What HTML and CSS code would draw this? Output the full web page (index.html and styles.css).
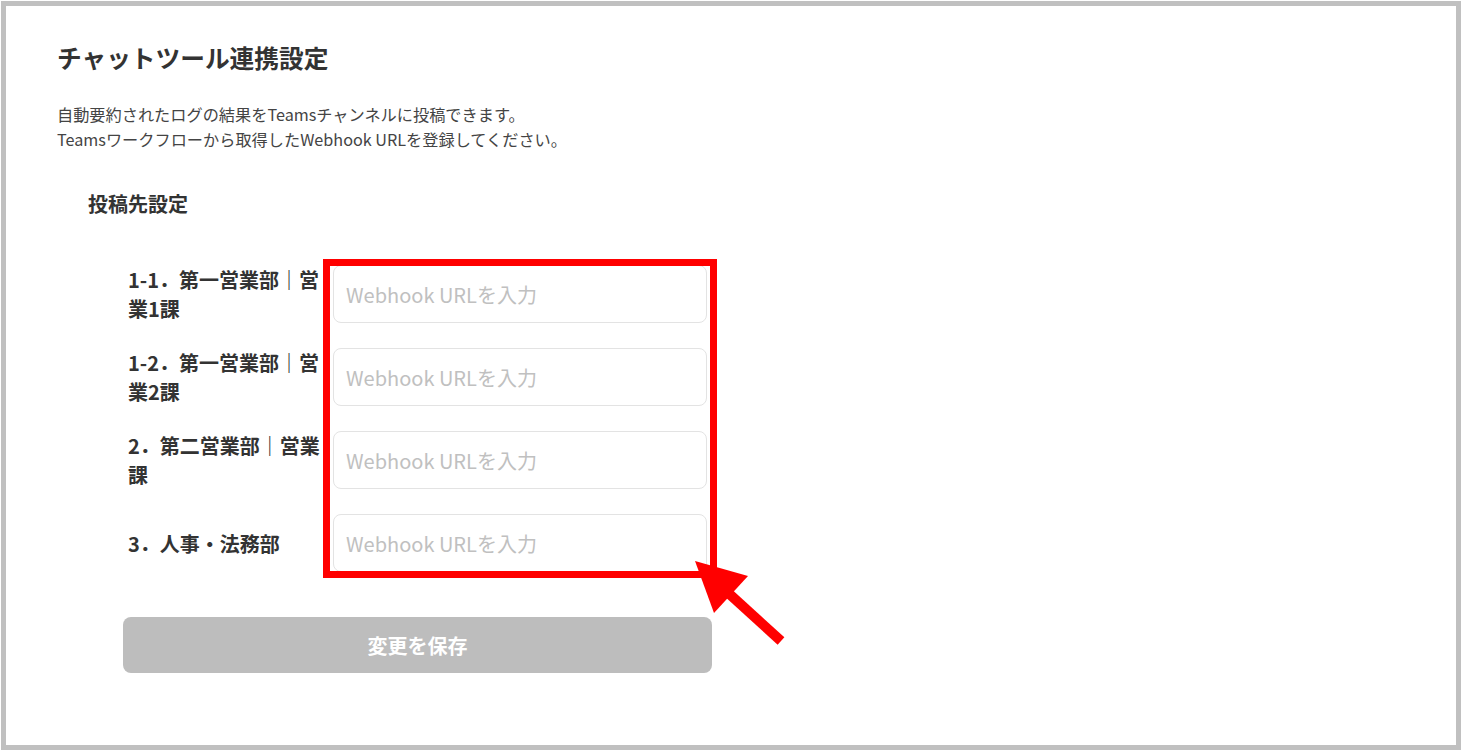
FILE: index.html
```html
<!DOCTYPE html>
<html lang="ja">
<head>
<meta charset="utf-8">
<title>チャットツール連携設定</title>
<link rel="stylesheet" href="styles.css">
</head>
<body>
<div class="card">
  <h1 class="title">チャットツール連携設定</h1>
  <p class="desc">自動要約されたログの結果をTeamsチャンネルに投稿できます。<br>Teamsワークフローから取得したWebhook URLを登録してください。</p>
  <h2 class="section">投稿先設定</h2>
  <div class="rows">
    <div class="row">
      <label class="label">1-1．第一営業部｜営業1課</label>
      <input class="field" type="text" placeholder="Webhook URLを入力">
    </div>
    <div class="row">
      <label class="label">1-2．第一営業部｜営業2課</label>
      <input class="field" type="text" placeholder="Webhook URLを入力">
    </div>
    <div class="row">
      <label class="label">2．第二営業部｜営業課</label>
      <input class="field" type="text" placeholder="Webhook URLを入力">
    </div>
    <div class="row">
      <label class="label">3．人事・法務部</label>
      <input class="field" type="text" placeholder="Webhook URLを入力">
    </div>
    <div class="highlight"></div>
  </div>
  <button class="save" type="button">変更を保存</button>
  <svg class="arrow" width="100" height="95" viewBox="0 0 100 95">
    <line x1="35" y1="35" x2="91" y2="86" stroke="#ff0000" stroke-width="10"/>
    <polygon points="5,6 58,21 24,58" fill="#ff0000"/>
  </svg>
</div>
</body>
</html>
```
FILE: styles.css
```css
* { box-sizing: border-box; }
html, body { margin: 0; padding: 0; background: #ffffff; }
body {
  font-family: "Noto Sans CJK JP", "Noto Sans", sans-serif;
  color: #333333;
}
.card {
  position: relative;
  margin: 1px 0 0 1px;
  width: 1460px;
  height: 749px;
  border: 5px solid #c0c0c0;
  padding: 35px 0 0 51px;
}
.title {
  margin: 0;
  font-size: 24.7px;
  line-height: 32px;
  font-weight: 700;
  color: #333333;
}
.desc {
  margin: 29px 0 0;
  font-size: 16.2px;
  line-height: 25px;
  color: #444444;
}
.section {
  margin: 38px 0 0 31px;
  font-size: 20px;
  line-height: 28px;
  font-weight: 700;
  color: #333333;
}
.rows {
  position: relative;
  margin: 47px 0 0 71px;
  width: 579px;
  display: flex;
  flex-direction: column;
  gap: 25px;
}
.row {
  display: flex;
  align-items: center;
  gap: 9px;
}
.label {
  width: 196px;
  flex: none;
  font-size: 20px;
  line-height: 29px;
  font-weight: 700;
  color: #333333;
}
.field {
  width: 374px;
  height: 58px;
  border: 1px solid #e3e3e3;
  border-radius: 8px;
  padding: 0 12px;
  font-family: "Noto Sans CJK JP", "Noto Sans", sans-serif;
  font-size: 20px;
  color: #333333;
  background: #ffffff;
  outline: none;
}
.field::placeholder { color: #c0c0c0; }
.highlight {
  position: absolute;
  left: 195px;
  top: -6px;
  bottom: -6px;
  width: 394px;
  border: 7px solid #ff0000;
  pointer-events: none;
}
.save {
  display: block;
  margin: 45px 0 0 66px;
  width: 589px;
  height: 56px;
  border: none;
  border-radius: 8px;
  background: #bdbdbd;
  color: #ffffff;
  font-family: "Noto Sans CJK JP", "Noto Sans", sans-serif;
  font-size: 20px;
  font-weight: 700;
}
.arrow {
  position: absolute;
  left: 684px;
  top: 549px;
}
```
